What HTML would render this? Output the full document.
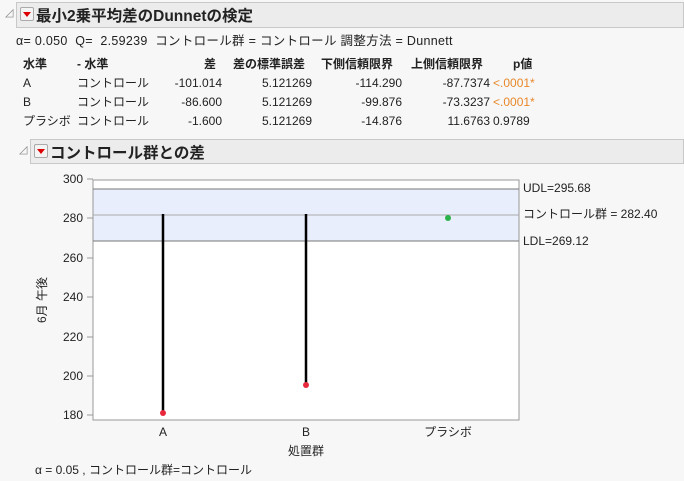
<!DOCTYPE html><html><head><meta charset="utf-8"><style>
body{margin:0;width:684px;height:481px;background:#f7f7f7;font-family:"Liberation Sans","Noto Sans CJK JP",sans-serif;font-size:12px;color:#222;position:relative;overflow:hidden}
.a{position:absolute;white-space:nowrap}
.hdr{position:absolute;background:#ececec;border:1px solid #c8c8c8;font-weight:bold;font-size:15px;color:#111}
.tri{position:absolute;width:12px;height:12px;border:1px solid #aaa;border-radius:2px;background:#f4f4f4}
.tri:after{content:"";position:absolute;left:2px;top:4px;border-left:4px solid transparent;border-right:4px solid transparent;border-top:5px solid #d00}
.r{text-align:right}
.o{color:#e8882a}
</style></head><body>
<div class="a" style="left:5px;top:6px;font-size:11px;color:#888">◿</div>
<div class="hdr" style="left:16px;top:2px;width:666px;height:24px"></div>
<div class="tri" style="left:20px;top:7px"></div>
<div class="a" style="left:36px;top:4px;font-size:15.5px;font-weight:bold">最小2乗平均差のDunnetの検定</div>
<div class="a" style="left:16px;top:30px;font-size:12.5px;letter-spacing:0.3px">α= 0.050&nbsp; Q= &nbsp;2.59239&nbsp; コントロール群 = コントロール 調整方法 = Dunnett</div>
<div class="a" style="left:23px;top:55px;font-weight:bold">水準</div>
<div class="a" style="left:77px;top:55px;font-weight:bold">- 水準</div>
<div class="a r" style="left:150px;top:55px;width:66px;font-weight:bold">差</div>
<div class="a" style="left:233px;top:55px;font-weight:bold">差の標準誤差</div>
<div class="a" style="left:321px;top:55px;font-weight:bold">下側信頼限界</div>
<div class="a" style="left:411px;top:55px;font-weight:bold">上側信頼限界</div>
<div class="a" style="left:513px;top:55px;font-weight:bold">p値</div>
<div class="a" style="left:23px;top:74px;line-height:19px">A<br>B<br>プラシボ</div>
<div class="a" style="left:77px;top:74px;line-height:19px">コントロール<br>コントロール<br>コントロール</div>
<div class="a r" style="left:140px;top:74px;width:82px;line-height:19px">-101.014<br>-86.600<br>-1.600</div>
<div class="a r" style="left:230px;top:74px;width:82px;line-height:19px">5.121269<br>5.121269<br>5.121269</div>
<div class="a r" style="left:310px;top:74px;width:92px;line-height:19px">-114.290<br>-99.876<br>-14.876</div>
<div class="a r" style="left:400px;top:74px;width:90px;line-height:19px">-87.7374<br>-73.3237<br>11.6763</div>
<div class="a" style="left:493px;top:74px;line-height:19px"><span class="o">&lt;.0001*</span><br><span class="o">&lt;.0001*</span><br>0.9789</div>
<div class="a" style="left:19px;top:143px;font-size:11px;color:#888">◿</div>
<div class="hdr" style="left:30px;top:139px;width:652px;height:23px"></div>
<div class="tri" style="left:34px;top:144px"></div>
<div class="a" style="left:50px;top:141px;font-size:15.5px;font-weight:bold">コントロール群との差</div>
<svg class="a" style="left:0;top:0" width="684" height="481" font-family="Liberation Sans, Noto Sans CJK JP, sans-serif" font-size="12">
<rect x="93" y="180" width="426" height="240" fill="#fff" stroke="#999"/>
<rect x="93.5" y="189" width="425" height="52" fill="#e8eefc"/>
<line x1="93" y1="189" x2="519" y2="189" stroke="#777"/>
<line x1="93" y1="215" x2="519" y2="215" stroke="#aaa"/>
<line x1="93" y1="241" x2="519" y2="241" stroke="#777"/>
<g stroke="#999"><line x1="87" y1="179" x2="93" y2="179"/><line x1="87" y1="218" x2="93" y2="218"/><line x1="87" y1="258" x2="93" y2="258"/><line x1="87" y1="297" x2="93" y2="297"/><line x1="87" y1="337" x2="93" y2="337"/><line x1="87" y1="376" x2="93" y2="376"/><line x1="87" y1="415" x2="93" y2="415"/></g>
<g text-anchor="end" fill="#222"><text x="83" y="183">300</text><text x="83" y="222">280</text><text x="83" y="262">260</text><text x="83" y="301">240</text><text x="83" y="341">220</text><text x="83" y="380">200</text><text x="83" y="419">180</text></g>
<line x1="163" y1="214" x2="163" y2="413" stroke="#000" stroke-width="2.5"/>
<line x1="306" y1="214" x2="306" y2="385" stroke="#000" stroke-width="2.5"/>
<circle cx="163" cy="413" r="3" fill="#e8283c"/><circle cx="306" cy="385" r="3" fill="#e8283c"/><circle cx="448" cy="218" r="3" fill="#2bb24a"/>
<g text-anchor="middle" fill="#222"><text x="163" y="436">A</text><text x="306" y="436">B</text><text x="448" y="436">プラシボ</text><text x="306" y="455">処置群</text></g>
<text x="523" y="192" fill="#222">UDL=295.68</text><text x="523" y="218" fill="#222">コントロール群 = 282.40</text><text x="523" y="245" fill="#222">LDL=269.12</text>
<text transform="translate(46,300) rotate(-90)" text-anchor="middle" fill="#222">6月 午後</text>
<text x="35" y="474" fill="#222">α = 0.05 , コントロール群=コントロール</text>
</svg>
</body></html>
